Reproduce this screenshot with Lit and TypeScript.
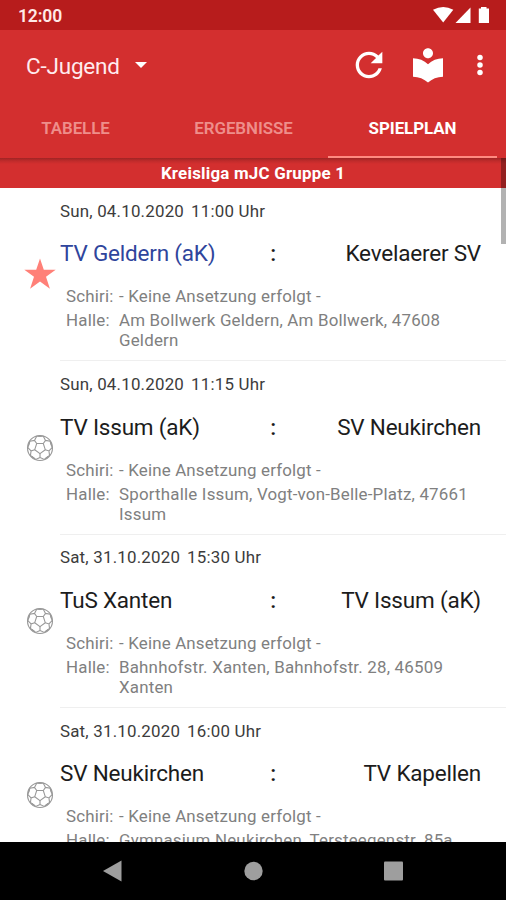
import { LitElement, html, css, svg } from "lit";
import { customElement, property } from "lit/decorators.js";

interface Match {
  date: string;
  time: string;
  home: string;
  guest: string;
  hall: string;
  favourite?: boolean;
}

const MATCHES: Match[] = [
  { date: "Sun, 04.10.2020", time: "11:00 Uhr", home: "TV Geldern (aK)", guest: "Kevelaerer SV", hall: "Am Bollwerk Geldern, Am Bollwerk, 47608 Geldern", favourite: true },
  { date: "Sun, 04.10.2020", time: "11:15 Uhr", home: "TV Issum (aK)", guest: "SV Neukirchen", hall: "Sporthalle Issum, Vogt-von-Belle-Platz, 47661 Issum" },
  { date: "Sat, 31.10.2020", time: "15:30 Uhr", home: "TuS Xanten", guest: "TV Issum (aK)", hall: "Bahnhofstr. Xanten, Bahnhofstr. 28, 46509 Xanten" },
  { date: "Sat, 31.10.2020", time: "16:00 Uhr", home: "SV Neukirchen", guest: "TV Kapellen", hall: "Gymnasium Neukirchen, Tersteegenstr. 85a" },
];

const spokes = [0, 72, 144, 216, 288];

@customElement("match-row")
class MatchRow extends LitElement {
  @property({ attribute: false }) match!: Match;

  static styles = css`
    :host { display: flex; height: 173.4px; box-sizing: border-box; }
    .mark { flex: none; width: 60px; display: flex; justify-content: flex-end; align-items: center; padding-right: 3px; box-sizing: border-box; }
    .star { width: 34px; height: 34px; margin-top: -2px; }
    .ball { width: 28px; height: 28px; margin-right: 3px; }
    .body { flex: 1; min-width: 0; border-bottom: 1px solid #efefef; box-sizing: border-box; }
    .date { font-size: 16.9px; line-height: 20px; padding-top: 12.6px; color: #3c3c3c; display: flex; gap: 7px; letter-spacing: 0.2px; }
    .teams { display: grid; grid-template-columns: 200px 26px 1fr; align-items: center; margin: 18.6px 25px 0 0; font-size: 22.5px; line-height: 28px; color: #1c1c1c; letter-spacing: -0.2px; }
    .favourite { color: #2f459c; }
    .colon { text-align: center; font-weight: 500; }
    .guest { text-align: right; }
    .info { display: grid; grid-template-columns: 53px 1fr; row-gap: 4px; margin: 19px 30px 0 6px; font-size: 16.9px; line-height: 20px; color: #808080; letter-spacing: 0.2px; }
    .info span:nth-child(2) { letter-spacing: 0.17px; }
  `;

  render() {
    const m = this.match;
    return html`
      <div class="mark">
        ${m.favourite
          ? html`<svg class="star" viewBox="0 0 34 34"><path fill="#ff8078" d="M17 1.5l3.8 11.300H32.700l-9.700 7 3.900 11.900L17 24.600l-9.900 7.100L11 19.800l-9.700-7h11.900z"/></svg>`
          : html`<svg class="ball" viewBox="-14 -14 28 28" fill="none" stroke="#989898" stroke-width="1.1">
              <circle r="12.5" />
              <path d="M0 5.6L5.3 1.7 3.3-4.5H-3.3L-5.3 1.700z" />
              ${spokes.map((a) => svg`<g transform="rotate(${a})"><path d="M0 5.6V9.400L4.200 11.400L8.200 8.500M0 9.400L-4.200 11.400L-8.200 8.500"/></g>`)}
            </svg>`}
      </div>
      <div class="body">
        <div class="date"><span>${m.date}</span><span>${m.time}</span></div>
        <div class="teams">
          <span class=${m.favourite ? "favourite" : "home"}>${m.home}</span>
          <span class="colon">:</span>
          <span class="guest">${m.guest}</span>
        </div>
        <div class="info">
          <span>Schiri:</span><span>- Keine Ansetzung erfolgt -</span>
          <span>Halle:</span><span>${m.hall}</span>
        </div>
      </div>
    `;
  }
}

@customElement("app-root")
class AppRoot extends LitElement {
  static styles = css`
    :host { display: flex; flex-direction: column; width: 506px; height: 900px; overflow: hidden; position: relative; background: #fff; font-family: Roboto, "Liberation Sans", sans-serif; }
    .status { flex: none; height: 30px; background: #b71c1c; display: flex; align-items: center; justify-content: space-between; padding: 0 16px 0 18px; box-sizing: border-box; color: #ffe9e7; font-size: 17.5px; font-weight: 600; line-height: 30px; letter-spacing: -0.15px; }
    .time { padding-top: 2px; }
    .signals { width: 58px; height: 18px; }
    .toolbar { flex: none; height: 70px; background: #d32f2f; display: flex; align-items: center; padding: 0 11px 0 26px; box-sizing: border-box; color: #ffebee; }
    .title { font-size: 22.5px; line-height: 28px; letter-spacing: -0.2px; padding-top: 1px; }
    .caret { width: 12px; height: 6px; margin-left: 15.500px; }
    .gap { flex: 1; }
    .icon { width: 40px; height: 40px; fill: #fff; }
    .book { margin-left: 19px; }
    .dots { width: 30px; height: 30px; margin-left: 17px; }
    .tabs { flex: none; height: 58px; background: #d32f2f; display: grid; grid-template-columns: 159px 169px 169px; }
    .tab { display: flex; align-items: center; justify-content: center; font-size: 16.9px; font-weight: 600; letter-spacing: -0.05px; color: #ee8e8b; box-sizing: border-box; border-bottom: 2.5px solid transparent; }
    .tab:first-child { padding-right: 8px; }
    .active { color: #fff; font-weight: 700; border-bottom-color: #ff8a80; }
    .group { flex: none; height: 30px; background: linear-gradient(#9f2424 0, #c02b2b 3px, #d32f2f 6px); color: #fff; font-size: 16.9px; font-weight: 700; letter-spacing: 0.22px; line-height: 31px; text-align: center; }
    .list { flex: 1; min-height: 0; overflow: hidden; }
    .nav { flex: none; height: 58px; background: #000; display: flex; }
    .nav-icons { width: 506px; height: 58px; fill: #9e9e9e; }
    .thumb { position: absolute; right: 0; top: 158px; width: 5px; height: 86px; background: rgba(0, 0, 0, 0.3); }
  `;

  render() {
    return html`
      <div class="status">
        <span class="time">12:00</span>
        <svg class="signals" viewBox="432 6 58 18" fill="#fff">
          <path d="M433 9.8Q443.300 4 453.300 9.800L443.200 22.500z" />
          <path d="M470.500 7.500V23H455.500z" />
          <path d="M481 8.500V7h5.500v1.500H489V23H478.800V8.500z" />
        </svg>
      </div>
      <div class="toolbar">
        <span class="title">C-Jugend</span>
        <svg class="caret" viewBox="0 0 12 6"><path fill="#fff" d="M0 0h12L6 6z" /></svg>
        <span class="gap"></span>
        <svg class="icon" viewBox="0 0 24 24"><path d="M17.65 6.35C16.200 4.900 14.210 4 12 4c-4.420 0-7.990 3.580-7.990 8s3.570 8 7.990 8c3.730 0 6.840-2.550 7.730-6h-2.080c-.82 2.330-3.040 4-5.650 4-3.310 0-6-2.690-6-6s2.690-6 6-6c1.660 0 3.140.69 4.220 1.780L13 11h7V4l-2.350 2.350z" /></svg>
        <svg class="icon book" viewBox="0 0 24 24"><path d="M12 11.550C9.640 9.350 6.480 8 3 8v11c3.480 0 6.640 1.350 9 3.550 2.360-2.190 5.520-3.550 9-3.550V8c-3.480 0-6.640 1.350-9 3.550zM12 8c1.660 0 3-1.340 3-3s-1.340-3-3-3-3 1.340-3 3 1.340 3 3 3z" /></svg>
        <svg class="icon dots" viewBox="0 0 24 24"><circle cx="12" cy="6" r="2.200" /><circle cx="12" cy="12" r="2.200" /><circle cx="12" cy="18" r="2.200" /></svg>
      </div>
      <div class="tabs">
        <div class="tab">TABELLE</div>
        <div class="tab">ERGEBNISSE</div>
        <div class="tab active">SPIELPLAN</div>
      </div>
      <div class="group">Kreisliga mJC Gruppe 1</div>
      <div class="list">${MATCHES.map((m) => html`<match-row .match=${m}></match-row>`)}</div>
      <div class="nav">
        <svg class="nav-icons" viewBox="0 842 506 58">
          <path d="M103 871L121.500 860.500V881.500z" />
          <circle cx="253.500" cy="871" r="9.200" />
          <rect x="384" y="861.500" width="19" height="19" rx="1" />
        </svg>
      </div>
      <div class="thumb"></div>
    `;
  }
}
